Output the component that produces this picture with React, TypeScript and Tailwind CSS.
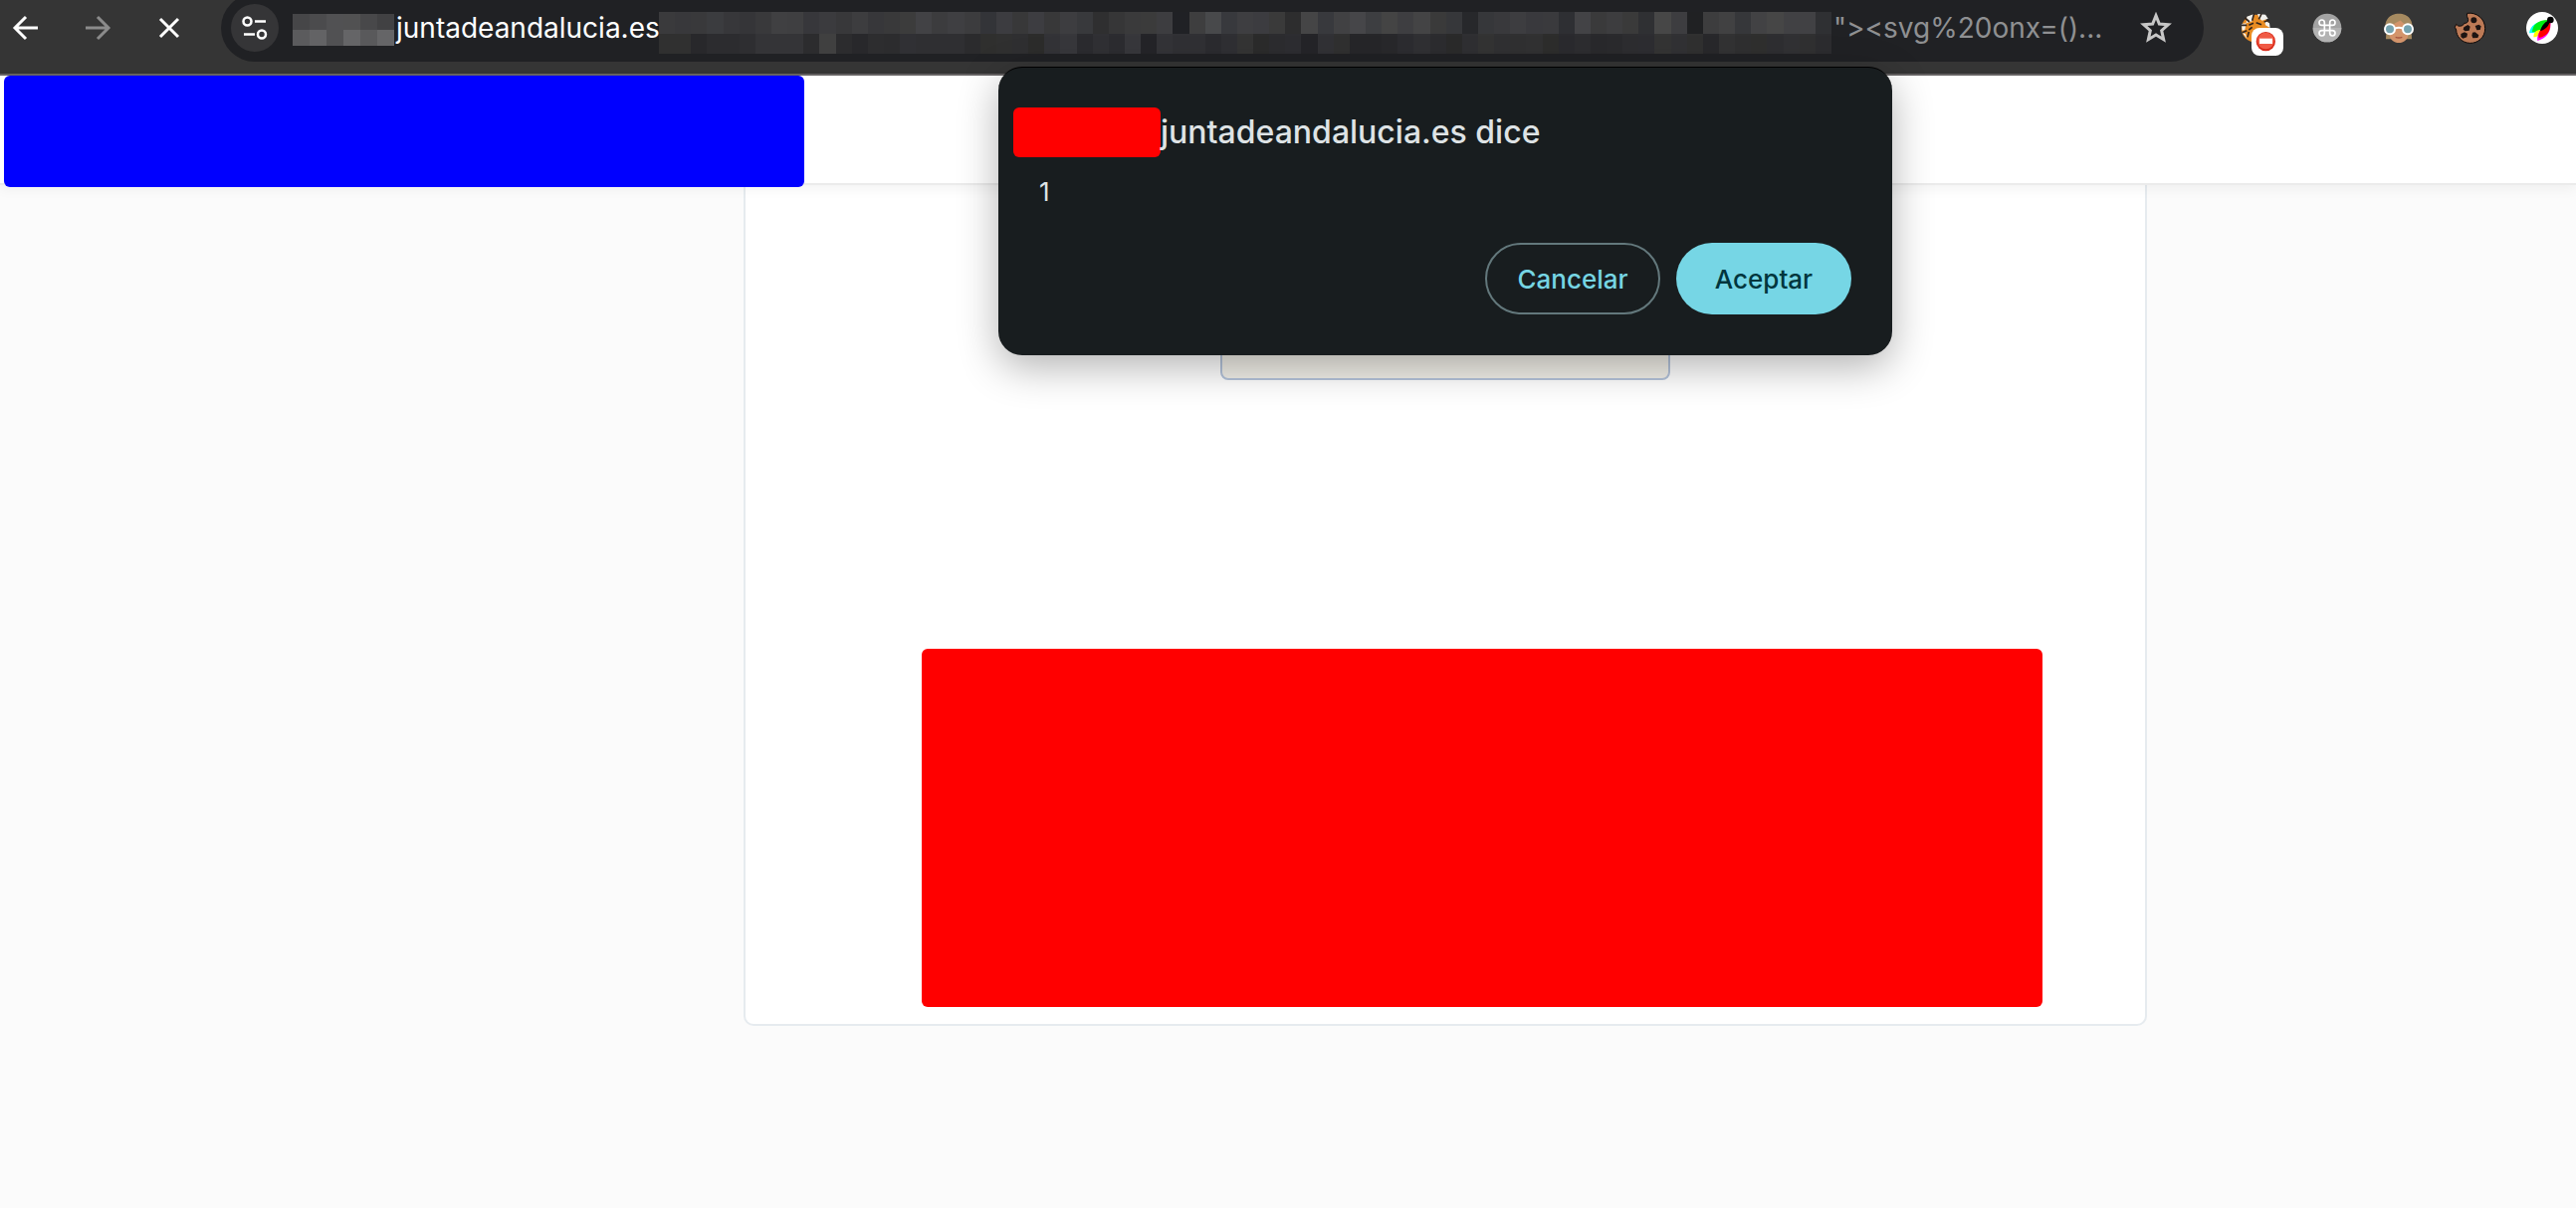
import React from "react";

const hostMosaic = [
  "464648 4b4b4d 515153 515152 48484a 414143",
  "5b5b5d 636365 515153 656567 59595b 656567",
];

const pathMosaic = [
  "3a3a3c 38383b 39393b 3b3c3f 37373a 353538 39393b 404042 3f3f41 37373b 3b3b3e 38383a 3d3d3f 37373a " +
    "39393a 3c3c3c 424245 3c3c3e 3f3f42 3c3c3e 333438 3c3c40 383839 3d3d41 383839 3d3d40 38393c 2f2f30 363637 3a3a3b 3b3b3b 3d3d40 202125 3e3e3f 48494b 38393d 3e3e41 3c3c40 3a3a3a 2d2d2e 454546 38393d 414143 464649 " +
    "3d3e41 444444 3e3e41 444445 3a3a3a 36373a 27282b 36373a 39393c 3d3d40 39393d 3a3a3d 2e2f33 434346 3a3a3b 3d3d3f 3a3a3a 2f3033 474747 3d3d40 202123 3d3d3e 414142 36373a 424244 464646 414144 414144 2f3033",
  "303030 303030 28282b 2c2c2f 2c2c2f 2e2e31 343437 343437 343437 2c2c2e 404040 2c2c2e 28282b 2d2d2f " +
    "2c2c2e 303034 2f2f32 2f2f32 2f2f32 2b2b2d 2f2f2e 303030 2f2f31 2c2c2b 333337 37373b 2b2b2f 303034 2c2c30 37373b 242428 333337 303034 303034 2b2b2f 2f2f33 343434 2b2b2b 2c2c2f 2d2d31 242428 313135 303030 262629 " +
    "262629 28282b 2c2c30 303033 2c2c2f 2a2a2a 2f2f32 333333 303032 303031 313132 2d2d2c 2a2a2e 2d2d30 29292c 2a2a2d 2d2d30 2d2d31 343434 313134 303030 28282b 323233 2f2f30 2f2f2e 2e2e31 313134 303031 2c2c2f",
];

function Mosaic({ rows, split, className }: { rows: string[]; split: number; className: string }) {
  const cells = rows.map((r) => r.split(" "));
  return (
    <svg
      aria-hidden="true"
      className={className}
      viewBox={`0 0 ${cells[0].length} 100`}
      preserveAspectRatio="none"
      shapeRendering="crispEdges"
    >
      {cells.map((row, y) =>
        row.map((c, x) => (
          <rect
            key={`${x}-${y}`}
            x={x}
            y={y === 0 ? 0 : split}
            width={1}
            height={y === 0 ? split : 100 - split}
            fill={`#${c}`}
          />
        )),
      )}
    </svg>
  );
}

function NavButton({ label, children, dim }: { label: string; children: React.ReactNode; dim?: boolean }) {
  return (
    <button
      type="button"
      aria-label={label}
      className={dim ? "h-8 w-8 shrink-0 text-[#8b8b8b]" : "h-8 w-8 shrink-0 text-white"}
    >
      <svg viewBox="0 0 32 32" className="h-8 w-8" fill="none" stroke="currentColor" strokeWidth="3">
        {children}
      </svg>
    </button>
  );
}

function Extension({ label, children }: { label: string; children: React.ReactNode }) {
  return (
    <button type="button" aria-label={label} className="h-8 w-8 shrink-0">
      <svg viewBox="0 0 96 96" className="h-8 w-8 overflow-visible">
        {children}
      </svg>
    </button>
  );
}

function Toolbar() {
  return (
    <header className="flex h-[76px] items-start border-b-2 border-[#666364] bg-[#353535]">
      <nav className="flex h-14 shrink-0 items-center gap-10 pl-[10px]">
        <NavButton label="Atrás">
          <path d="M28 16H6M16 5 5 16l11 11" />
        </NavButton>
        <NavButton label="Adelante" dim>
          <path d="M4 16h22M16 5l11 11-11 11" />
        </NavButton>
        <NavButton label="Detener">
          <path d="M7 7l18 18M25 7 7 25" />
        </NavButton>
      </nav>
      <div className="-mt-[6px] ml-9 flex h-[68px] min-w-0 flex-1 items-center rounded-full bg-[#202124] pl-[10px]">
        <button
          type="button"
          aria-label="Información del sitio"
          className="flex h-12 w-12 shrink-0 items-center justify-center rounded-full bg-[#353537]"
        >
          <svg viewBox="0 0 96 96" className="h-12 w-12" fill="none" stroke="#fff" strokeWidth="5">
            <circle cx="33" cy="35" r="8" />
            <path d="M48 35h22M26 61h22" />
            <circle cx="62" cy="61" r="8" />
          </svg>
        </button>
        <div className="ml-[14px] flex min-w-0 items-center whitespace-nowrap text-[28px] leading-10">
          <Mosaic rows={hostMosaic} split={50} className="mt-1 h-8 w-[102px] shrink-0" />
          <span className="ml-[2px] w-[264px] shrink-0 text-white">juntadeandalucia.es</span>
          <Mosaic rows={pathMosaic} split={52} className="mt-[10px] h-[42px] w-[1178px] shrink" />
          <span className="ml-[2px] shrink-0 text-[#8f9092]">{'"><svg%20onx=()...'}</span>
        </div>
        <button type="button" aria-label="Añadir a marcadores" className="mr-8 ml-auto h-8 w-8 shrink-0">
          <svg viewBox="0 0 96 96" className="h-8 w-8" fill="none" stroke="#c7c7c7" strokeWidth="9">
            <path d="M48 11 58 36 85 38 65 56 71 83 48 69 25 83 31 56 11 38 38 36Z" />
          </svg>
        </button>
      </div>
      <div className="flex h-14 shrink-0 items-center gap-10 pr-[18px] pl-9">
        <Extension label="Extensión bloqueada">
          <circle cx="48" cy="50" r="42" fill="#e98c22" />
          <path d="M22 14 44 6l-6 22-18 6ZM54 6l24 2 8 12-18 6-8-6ZM6 36l14-2-4 20-8 2ZM76 26l14 8 2 14-14-8ZM8 62l10 4 4 14Z" fill="#f2f2ee" />
          <path d="M16 18l14 12M44 4 38 26M66 6 58 22M90 24 74 30M6 40h16M8 62l14-6M28 40l14-6M50 32l16 6M28 54l10-8M24 76l4-16" stroke="#33261e" strokeWidth="5" />
          <rect x="36" y="48" width="96" height="84" rx="24" fill="#fff" />
          <circle cx="79" cy="89" r="29" fill="#d92b1b" />
          <circle cx="79" cy="87" r="25" fill="#f05a45" />
          <rect x="60" y="80" width="39" height="16" fill="#fff" />
        </Extension>
        <Extension label="Atajos">
          <circle cx="48" cy="48" r="43" fill="#a3a3a3" />
          <path d="M5 48a43 43 0 0 0 86 0Z" fill="#b3b3b3" />
          <path
            d="M40 40v16M56 40v16M40 40h16M40 56h16M40 40h-8a8 8 0 1 1 8-8ZM56 40v-8a8 8 0 1 1 8 8ZM40 56v8a8 8 0 1 1-8-8ZM56 56h8a8 8 0 1 1-8 8Z"
            fill="none"
            stroke="#fff"
            strokeWidth="5"
          />
        </Extension>
        <Extension label="Lector">
          <path d="M10 60C0 26 20 5 48 5s48 21 38 55l1 22H9Z" fill="#a68a60" />
          <path d="M20 46 48 22l28 24v22c0 15-14 25-28 25S20 83 20 68Z" fill="#d3946b" />
          <path d="M18 50C26 34 50 32 60 18c10 8 18 20 18 30V20L48 6 20 18Z" fill="#a68a60" />
          <circle cx="21" cy="52" r="15" fill="#75a3b0" stroke="#fff" strokeWidth="6" />
          <circle cx="75" cy="52" r="15" fill="#75a3b0" stroke="#fff" strokeWidth="6" />
          <path d="M36 50q12-6 24 0" fill="none" stroke="#fff" strokeWidth="6" />
          <path d="M38 76q10 4 20 0" fill="none" stroke="#a8563f" strokeWidth="4" />
        </Extension>
        <Extension label="Cookies">
          <path
            d="M38 4C66 0 92 20 92 50c0 27-22 45-46 44C20 93 5 72 5 54l-4-8 4-9 6 5c8 2 16-1 18-8 8 1 13-4 12-12-2-6-5-9-3-18Z"
            fill="#bd7a56"
            stroke="#0c0808"
            strokeWidth="3"
          />
          <g fill="#1d1412">
            <circle cx="58" cy="25" r="9" />
            <path d="M28 46l12-7 7 5-3 12-12 2-6-5ZM62 42l11-4 7 5-3 11-10 1ZM19 66l11-5 9 4-2 11-12 4-6-5ZM54 62l8-1 11 9-3 8-15 1-3-8Z" />
          </g>
        </Extension>
        <Extension label="Selector de color">
          <circle cx="48" cy="48" r="48" fill="#fff" />
          <path d="M9 64C12 42 30 26 68 27 60 48 42 64 9 64Z" fill="#0ff" />
          <path d="M18 61C18 40 34 22 72 24 66 44 52 61 18 61Z" fill="#0e1" />
          <path d="M22 76C22 58 34 52 48 54 44 66 36 76 22 76Z" fill="#ff0" />
          <path d="M34 87C30 68 44 48 72 26 78 58 62 78 34 87Z" fill="#f0f" />
          <path d="M38 78C34 60 46 46 72 26 76 54 66 72 38 78Z" fill="#f00" />
          <path d="M42 58C46 40 58 28 72 24 70 40 60 52 42 58Z" fill="#000" />
          <circle cx="73" cy="24" r="10" fill="#000" />
        </Extension>
      </div>
    </header>
  );
}

function AlertDialog() {
  return (
    <div className="absolute inset-x-0 top-[67px] z-20 flex justify-center pl-[316px]">
      <section
        role="alertdialog"
        aria-labelledby="dialog-title"
        aria-describedby="dialog-message"
        className="w-[898px] rounded-3xl border-t border-black bg-[#181d1f] pt-10 pr-[41px] pb-[41px] pl-[15px] text-[#dee3e5] shadow-[0_12px_40px_rgba(0,0,0,0.3)]"
      >
        <div className="flex items-center">
          <span className="h-[50px] w-[148px] shrink-0 rounded-md bg-[#ff0000]" />
          <h1 id="dialog-title" className="text-[32px] leading-[50px] font-medium whitespace-nowrap">
            juntadeandalucia.es dice
          </h1>
        </div>
        <p id="dialog-message" className="mt-[19px] pl-[26px] text-[26px] leading-8">
          1
        </p>
        <div className="mt-[35px] flex justify-end gap-4 text-[26px] font-medium">
          <button type="button" className="h-[72px] w-44 rounded-full border-2 border-[#63787c] text-[#76d5e3]">
            Cancelar
          </button>
          <button type="button" className="h-[72px] w-44 rounded-full bg-[#76d6e5] text-[#00363d]">
            Aceptar
          </button>
        </div>
      </section>
    </div>
  );
}

export default function App() {
  return (
    <div className="relative min-h-screen overflow-hidden bg-[#fbfbfb] font-['Inter','Liberation_Sans',sans-serif]">
      <Toolbar />
      <div className="relative z-10 h-[110px] border-b-2 border-[#ebebeb] bg-white pl-1 shadow-[0_4px_12px_rgba(0,0,0,0.05)]">
        <div className="h-28 w-[804px] rounded-md bg-[#0000ff]" />
      </div>
      <main className="flex justify-center pl-[316px]">
        <form className="w-full max-w-[1410px] rounded-b-[10px] border-2 border-t-0 border-[#e6ebef] bg-white pt-[124px] pb-[17px]">
          <input
            type="text"
            aria-label="Usuario"
            className="mx-auto block h-[72px] w-[452px] rounded-lg border-2 border-[#b4c3da] bg-[#f2f0e9]"
          />
          <div className="mt-[270px] ml-[177px] h-[360px] w-[1126px] rounded-md bg-[#ff0000]" />
        </form>
      </main>
      <AlertDialog />
    </div>
  );
}
